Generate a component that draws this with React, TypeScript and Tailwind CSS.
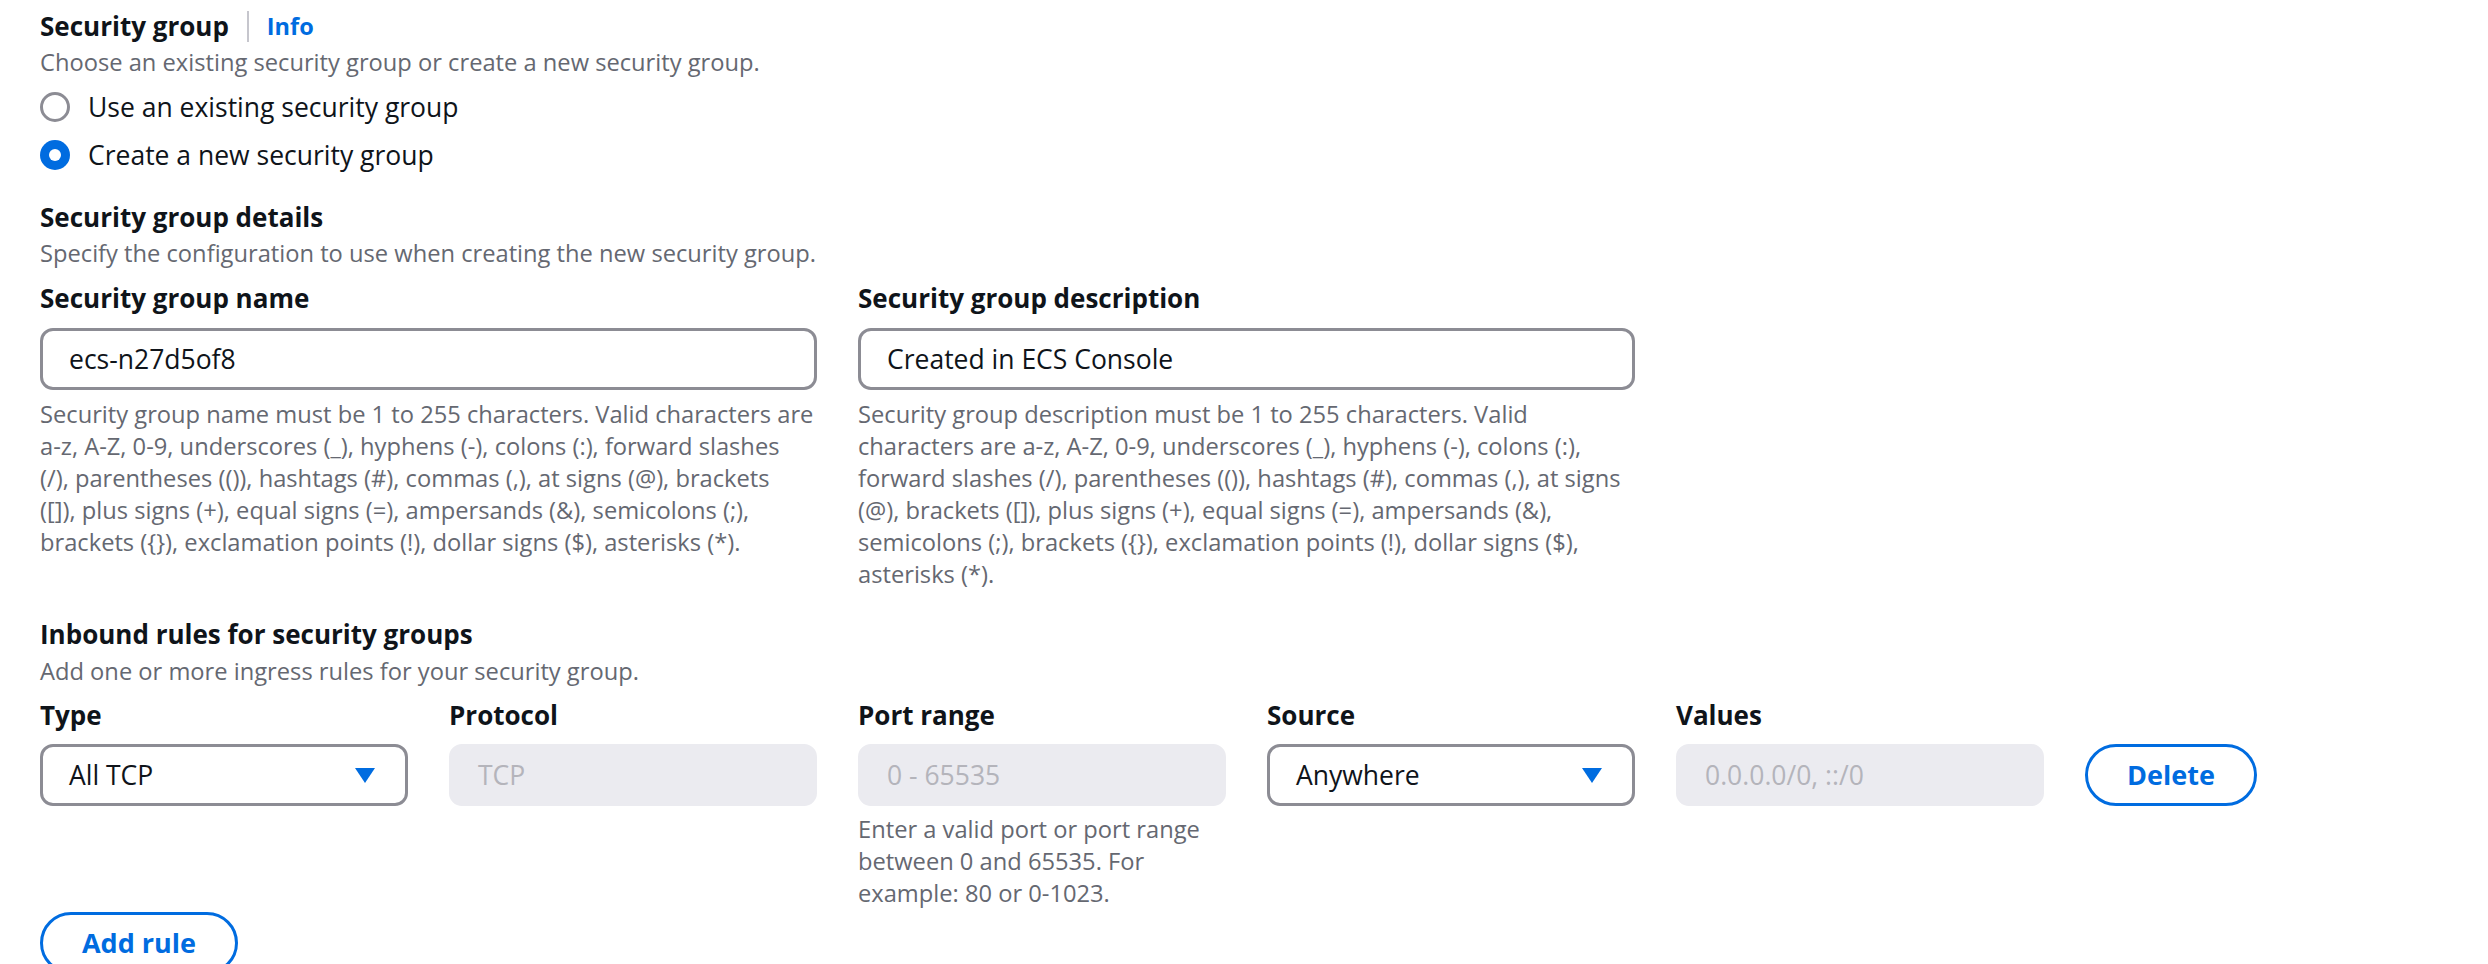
import React from "react";

const value = "text-[26.5px] leading-[32px] text-[#0f141a]";
const label = "text-[26px] leading-[32px] font-bold text-[#0f141a]";
const desc = "text-[23.7px] leading-[32px] text-[#656871]";

const nameHelp = [
  "Security group name must be 1 to 255 characters. Valid characters are",
  "a-z, A-Z, 0-9, underscores (_), hyphens (-), colons (:), forward slashes",
  "(/), parentheses (()), hashtags (#), commas (,), at signs (@), brackets",
  "([]), plus signs (+), equal signs (=), ampersands (&), semicolons (;),",
  "brackets ({}), exclamation points (!), dollar signs ($), asterisks (*).",
];

const descHelp = [
  "Security group description must be 1 to 255 characters. Valid",
  "characters are a-z, A-Z, 0-9, underscores (_), hyphens (-), colons (:),",
  "forward slashes (/), parentheses (()), hashtags (#), commas (,), at signs",
  "(@), brackets ([]), plus signs (+), equal signs (=), ampersands (&),",
  "semicolons (;), brackets ({}), exclamation points (!), dollar signs ($),",
  "asterisks (*).",
];

function Radio({ checked, text }: { checked?: boolean; text: string }) {
  return (
    <label className="flex items-center h-[32px] cursor-pointer">
      {checked ? (
        <span className="w-[30px] h-[30px] rounded-full bg-[#006ce0] flex items-center justify-center shrink-0">
          <span className="w-[12px] h-[12px] rounded-full bg-white" />
        </span>
      ) : (
        <span className="w-[30px] h-[30px] rounded-full border-[3px] border-[#8c8c94] bg-white shrink-0" />
      )}
      <span className={`ml-[18px] ${value}`}>{text}</span>
    </label>
  );
}

function TextInput({ text }: { text: string }) {
  return (
    <div className="h-[62px] rounded-[13px] border-[3px] border-[#8c8c94] bg-white flex items-center pl-[26px]">
      <span className={value}>{text}</span>
    </div>
  );
}

function DisabledInput({ text }: { text: string }) {
  return (
    <div className="h-[62px] rounded-[13px] border-[3px] border-[#ebebf0] bg-[#ebebf0] flex items-center pl-[26px]">
      <span className="text-[26.5px] leading-[32px] text-[#b4b4bb]">{text}</span>
    </div>
  );
}

function Select({ text }: { text: string }) {
  return (
    <div className="h-[62px] rounded-[13px] border-[3px] border-[#8c8c94] bg-white flex items-center justify-between pl-[26px] pr-[30px]">
      <span className={value}>{text}</span>
      <svg width="20" height="15" viewBox="0 0 20 15">
        <path d="M0 0 H20 L10 15 Z" fill="#006ce0" />
      </svg>
    </div>
  );
}

function Button({ children, className = "" }: { children: React.ReactNode; className?: string }) {
  return (
    <button
      className={`h-[62px] rounded-full border-[3px] border-[#006ce0] bg-white text-[#006ce0] text-[27px] font-bold leading-[32px] ${className}`}
    >
      {children}
    </button>
  );
}

function Help({ lines }: { lines: string[] }) {
  return (
    <div className={`mt-[8px] ${desc}`}>
      {lines.map((l, i) => (
        <div key={i} className="whitespace-nowrap">
          {l}
        </div>
      ))}
    </div>
  );
}

export default function App() {
  return (
    <div className="min-h-screen bg-white pl-[40px] pt-[10px] font-['Open_Sans',sans-serif]">
      {/* Security group */}
      <div className="flex items-center">
        <h2 className={label}>Security group</h2>
        <span className="w-[2px] h-[31px] bg-[#c6c6cd] mx-[18px]" />
        <a className="text-[23.5px] leading-[32px] font-bold text-[#006ce0]">Info</a>
      </div>
      <p className={`mt-[4px] ${desc}`}>Choose an existing security group or create a new security group.</p>
      <div className="mt-[13px] flex flex-col gap-[16px]">
        <Radio text="Use an existing security group" />
        <Radio checked text="Create a new security group" />
      </div>

      {/* Details */}
      <h3 className={`mt-[30px] ${label}`}>Security group details</h3>
      <p className={`mt-[4px] ${desc}`}>Specify the configuration to use when creating the new security group.</p>

      <div className="mt-[13px] grid grid-cols-[777px_777px] gap-x-[41px]">
        <div>
          <div className={label}>Security group name</div>
          <div className="mt-[14px]">
            <TextInput text="ecs-n27d5of8" />
          </div>
          <Help lines={nameHelp} />
        </div>
        <div>
          <div className={label}>Security group description</div>
          <div className="mt-[14px]">
            <TextInput text="Created in ECS Console" />
          </div>
          <Help lines={descHelp} />
        </div>
      </div>

      {/* Inbound rules */}
      <h3 className={`mt-[28px] ${label}`}>Inbound rules for security groups</h3>
      <p className={`mt-[5px] ${desc}`}>Add one or more ingress rules for your security group.</p>

      <div className="mt-[12px] grid grid-cols-[368px_368px_368px_368px_368px_172px] gap-x-[41px]">
        <div>
          <div className={label}>Type</div>
          <div className="mt-[13px]">
            <Select text="All TCP" />
          </div>
        </div>
        <div>
          <div className={label}>Protocol</div>
          <div className="mt-[13px]">
            <DisabledInput text="TCP" />
          </div>
        </div>
        <div>
          <div className={label}>Port range</div>
          <div className="mt-[13px]">
            <DisabledInput text="0 - 65535" />
          </div>
          <p className={`mt-[7px] ${desc}`}>Enter a valid port or port range between 0 and 65535. For example: 80 or 0-1023.</p>
        </div>
        <div>
          <div className={label}>Source</div>
          <div className="mt-[13px]">
            <Select text="Anywhere" />
          </div>
        </div>
        <div>
          <div className={label}>Values</div>
          <div className="mt-[13px]">
            <DisabledInput text="0.0.0.0/0, ::/0" />
          </div>
        </div>
        <div className="pt-[45px]">
          <Button className="w-[172px]">Delete</Button>
        </div>
      </div>

      <div className="mt-[3px]">
        <Button className="w-[198px]">Add rule</Button>
      </div>
    </div>
  );
}
